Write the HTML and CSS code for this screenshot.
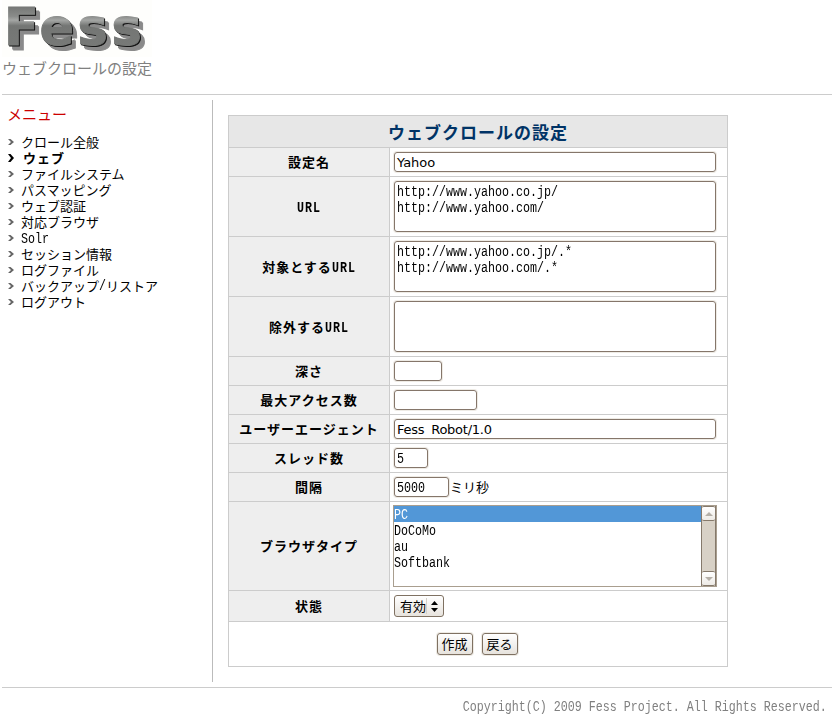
FILE: index.html
```html
<!DOCTYPE html>
<html lang="ja">
<head>
<meta charset="utf-8">
<title>Fess</title>
<link rel="stylesheet" href="styles.css">
</head>
<body>
<header class="header">
  <svg class="logo" width="150" height="57" viewBox="0 0 150 57">
    <defs>
      <linearGradient id="metal" gradientUnits="userSpaceOnUse" x1="0" y1="7" x2="0" y2="46">
        <stop offset="0" stop-color="#767876"/>
        <stop offset="0.24" stop-color="#8a8c8a"/>
        <stop offset="0.34" stop-color="#a4a6a4"/>
        <stop offset="0.48" stop-color="#747674"/>
        <stop offset="1" stop-color="#777977"/>
      </linearGradient>
    </defs>
    <text class="logo-text" x="2 37.5 75.5 109.5" y="45" fill="url(#metal)" stroke="url(#metal)" stroke-width="1">Fess</text>
  </svg>
  <div class="tagline">ウェブクロールの設定</div>
</header>
<div class="main">
  <nav class="side">
    <h2 class="menu-title">メニュー</h2>
    <ul class="menu">
      <li><svg class="arrow" viewBox="0 0 6 8"><path d="M0 1H2.5L6 4 2.5 7H0L3 4z"/></svg>クロール全般</li>
      <li class="current"><svg class="arrow" viewBox="0 0 6 8"><path d="M0 0H2.5L6 4 2.5 8H0L3 4z"/></svg>ウェブ</li>
      <li><svg class="arrow" viewBox="0 0 6 8"><path d="M0 1H2.5L6 4 2.5 7H0L3 4z"/></svg>ファイルシステム</li>
      <li><svg class="arrow" viewBox="0 0 6 8"><path d="M0 1H2.5L6 4 2.5 7H0L3 4z"/></svg>パスマッピング</li>
      <li><svg class="arrow" viewBox="0 0 6 8"><path d="M0 1H2.5L6 4 2.5 7H0L3 4z"/></svg>ウェブ認証</li>
      <li><svg class="arrow" viewBox="0 0 6 8"><path d="M0 1H2.5L6 4 2.5 7H0L3 4z"/></svg>対応ブラウザ</li>
      <li><svg class="arrow" viewBox="0 0 6 8"><path d="M0 1H2.5L6 4 2.5 7H0L3 4z"/></svg><span class="mono latin-item">Solr</span></li>
      <li><svg class="arrow" viewBox="0 0 6 8"><path d="M0 1H2.5L6 4 2.5 7H0L3 4z"/></svg>セッション情報</li>
      <li><svg class="arrow" viewBox="0 0 6 8"><path d="M0 1H2.5L6 4 2.5 7H0L3 4z"/></svg>ログファイル</li>
      <li><svg class="arrow" viewBox="0 0 6 8"><path d="M0 1H2.5L6 4 2.5 7H0L3 4z"/></svg>バックアップ<span class="mono slash">/</span>リストア</li>
      <li><svg class="arrow" viewBox="0 0 6 8"><path d="M0 1H2.5L6 4 2.5 7H0L3 4z"/></svg>ログアウト</li>
    </ul>
  </nav>
  <section class="form">
    <h1 class="title">ウェブクロールの設定</h1>
    <div class="row"><div class="label">設定名</div><div class="cell"><div class="field wide">Yahoo</div></div></div>
    <div class="row tall"><div class="label"><span class="mono url">URL</span></div><div class="cell"><div class="field area"><span class="mono">http://www.yahoo.co.jp/<br>http://www.yahoo.com/</span></div></div></div>
    <div class="row tall"><div class="label">対象とする<span class="mono url">URL</span></div><div class="cell"><div class="field area"><span class="mono">http://www.yahoo.co.jp/.*<br>http://www.yahoo.com/.*</span></div></div></div>
    <div class="row tall"><div class="label">除外する<span class="mono url">URL</span></div><div class="cell"><div class="field area"></div></div></div>
    <div class="row"><div class="label">深さ</div><div class="cell"><div class="field w-depth"></div></div></div>
    <div class="row"><div class="label">最大アクセス数</div><div class="cell"><div class="field w-count"></div></div></div>
    <div class="row"><div class="label">ユーザーエージェント</div><div class="cell"><div class="field wide agent">Fess Robot/1.0</div></div></div>
    <div class="row"><div class="label">スレッド数</div><div class="cell"><div class="field w-thread"><span class="mono">5</span></div></div></div>
    <div class="row"><div class="label">間隔</div><div class="cell"><div class="field w-interval"><span class="mono">5000</span></div><span class="unit">ミリ秒</span></div></div>
    <div class="row list-row"><div class="label">ブラウザタイプ</div><div class="cell">
      <div class="list">
        <ul class="options">
          <li class="selected"><span class="mono">PC</span></li>
          <li><span class="mono">DoCoMo</span></li>
          <li><span class="mono">au</span></li>
          <li><span class="mono">Softbank</span></li>
        </ul>
        <div class="scroll">
          <span class="scroll-btn"><svg width="8" height="4"><path d="M0 4 4 0 8 4z"/></svg></span>
          <span class="scroll-btn"><svg width="8" height="4"><path d="M0 0 4 4 8 0z"/></svg></span>
        </div>
      </div>
    </div></div>
    <div class="row state-row"><div class="label">状態</div><div class="cell">
      <div class="select"><span class="select-text">有効</span><svg width="7" height="11"><path d="M0 4 3.5 0 7 4zM0 7 3.5 11 7 7z"/></svg></div>
    </div></div>
    <div class="actions"><button class="btn">作成</button><button class="btn">戻る</button></div>
  </section>
</div>
<footer class="footer"><span class="mono">Copyright(C) 2009 Fess Project. All Rights Reserved.</span></footer>
</body>
</html>
```
FILE: styles.css
```css
* { box-sizing: border-box; }
body {
  margin: 0 4px 0 2px;
  background: #fff;
  color: #000;
  font: 13px/16px "Noto Sans CJK JP", sans-serif;
  white-space: nowrap;
}
h1, h2, ul { margin: 0; padding: 0; }
li { list-style: none; }

/* Latin text is condensed to a half-width cell of 7px */
.mono {
  display: inline-block;
  font-family: "Liberation Mono", monospace;
  font-size: 14px;
  transform: scaleX(.8333);
  transform-origin: left center;
}

.header { height: 95px; border-bottom: 1px solid #ccc; }
.logo { display: block; background: #fefefc; }
.logo-text {
  font: bold 51px "DejaVu Sans", sans-serif;
  filter: drop-shadow(1px 1px 0 #111) drop-shadow(4px 4px 0 #8a8a8a);
}
.tagline { padding-top: 1px; color: #808080; font-size: 15px; line-height: 20px; }

.main { display: flex; height: 593px; padding: 5px 0; border-bottom: 1px solid #ccc; }
.side { width: 211px; padding-left: 5px; border-right: 1px solid #bbb; height: 582px; }
.menu-title { padding-top: 4px; color: #c00; font-size: 15px; font-weight: 400; line-height: 20px; }
.menu { padding-top: 10px; }
.menu li { display: flex; align-items: center; height: 16px; }
.arrow { width: 6px; height: 8px; margin: 0 7px 0 1px; fill: #666; }
.current { font-weight: 700; letter-spacing: 1px; }
.current .arrow { fill: #000; margin-right: 9px; }
.slash { width: 7px; }
.latin-item { padding-top: 2px; }

.form { width: 500px; height: 552px; margin: 15px 0 0 15px; border: 1px solid #ccc; border-bottom: 0; }
.title {
  height: 32px;
  border-bottom: 1px solid #ccc;
  background: #e7e7e7;
  color: #036;
  font-size: 17px;
  line-height: 31px;
  letter-spacing: 1px;
  text-align: center;
}
.row { display: flex; height: 29px; border-bottom: 1px solid #ccc; }
.tall { height: 60px; }
.list-row { height: 89px; }
.state-row { height: 31px; }
.label {
  display: flex;
  align-items: center;
  justify-content: center;
  width: 161px;
  border-right: 1px solid #ccc;
  background: #eee;
  font-weight: 700;
  letter-spacing: 1px;
}
.url { width: 24px; padding-top: 2px; letter-spacing: 1.2px; }
.cell { display: flex; align-items: flex-start; padding: 4px 0 0 4px; }
.field {
  height: 20px;
  padding: 2px 0 0 2px;
  border: 1px solid #85766a;
  border-radius: 3px;
  box-shadow: 0 0 0 1px #eeebe5;
  font-family: "DejaVu Sans", sans-serif;
  line-height: 16px;
}
.wide { width: 322px; }
.area { width: 322px; height: 51px; }
.agent { word-spacing: 3px; letter-spacing: -.25px; }
.w-depth { width: 48px; }
.w-count { width: 83px; }
.w-thread { width: 34px; }
.w-interval { width: 55px; }
.unit { padding: 2px 0 0 1px; }

.list { display: flex; width: 324px; height: 82px; margin: -1px 0 0 -1px; border: 1px solid #a99e8f; }
.options { flex: 1; }
.options li { height: 16px; }
.options .selected { background: #5297d7; color: #fff; }
.scroll {
  display: flex;
  flex-direction: column;
  justify-content: space-between;
  width: 15px;
  border: solid #85796b;
  border-width: 0 1px;
  background: #d8d1c6;
}
.scroll-btn {
  display: flex;
  align-items: center;
  justify-content: center;
  height: 15px;
  border: 1px solid #85796b;
  border-width: 1px 0;
  border-radius: 2px;
  background: linear-gradient(#fff, #eeebe6);
  fill: #b5b0a8;
}

.select, .btn {
  border: 1px solid #7f7162;
  border-radius: 3px;
  background: linear-gradient(#fff, #f3f1ee 50%, #e7e3dd);
}
.select { display: flex; align-items: center; width: 50px; height: 22px; padding-left: 5px; }
.select-text { width: 27px; border-right: 1px solid #d5d0c8; margin-right: 4px; }
.actions { display: flex; justify-content: center; gap: 9px; height: 45px; padding: 11px 2px 0 0; border-bottom: 1px solid #ccc; }
.btn {
  width: 36px;
  height: 22px;
  padding: 0;
  box-shadow: 0 0 0 1px #eeebe5;
  color: #000;
  font: 13px/18px "Noto Sans CJK JP", sans-serif;
}

.footer { display: flex; justify-content: flex-end; padding: 11px 5px 0 0; color: #808080; }
.footer .mono { transform-origin: right center; }
```
